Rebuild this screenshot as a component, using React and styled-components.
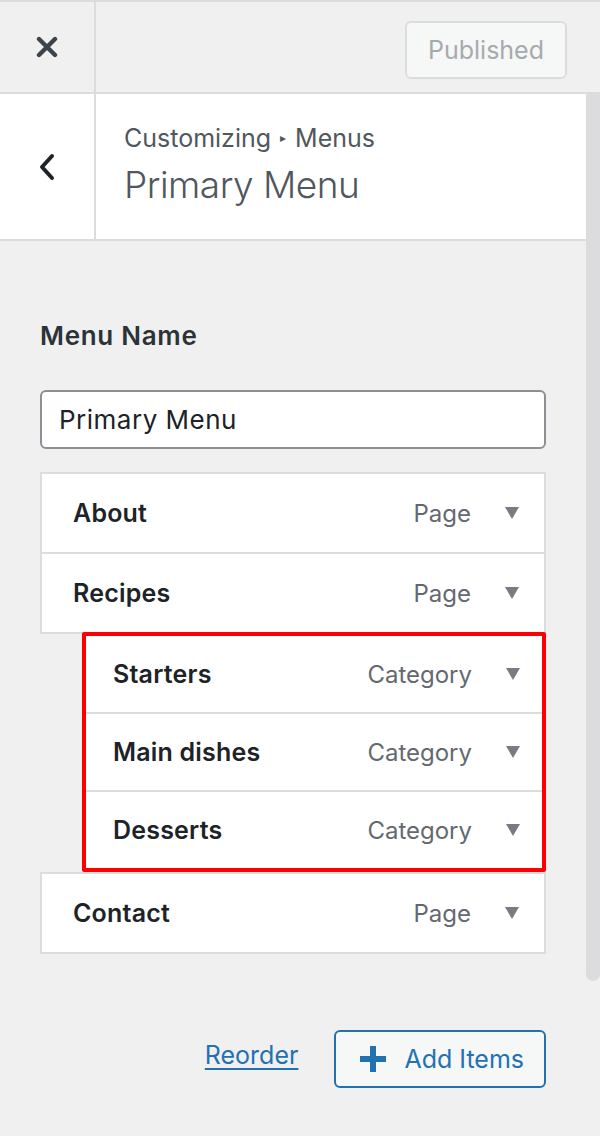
import React from 'react';
import styled, {createGlobalStyle} from 'styled-components';

const GlobalStyle = createGlobalStyle`
  html, body {
    margin: 0;
    padding: 0;
    background: #f0f0f1;
  }
  body {
    font-family: Inter, "Noto Sans", "Liberation Sans", sans-serif;
    -webkit-font-smoothing: antialiased;
  }
`;

const Page = styled.div`
  width: 600px;
  height: 1136px;
  display: flex;
  flex-direction: column;
  overflow: hidden;
  background: #f0f0f1;
`;

const TopBar = styled.div`
  display: flex;
  height: 90px;
  border-top: 2px solid #dcdcde;
  border-bottom: 2px solid #dcdcde;
  background: #f0f0f1;
`;

const CloseCell = styled.div`
  width: 94px;
  display: flex;
  align-items: center;
  justify-content: center;
  border-right: 2px solid #dcdcde;
`;

const TopBarActions = styled.div`
  flex: 1;
  display: flex;
  align-items: center;
  justify-content: flex-end;
  padding-right: 33px;
`;

const PublishedButton = styled.button`
  box-sizing: border-box;
  height: 58px;
  padding: 0 21px 0 21px;
  border: 2px solid #dcdcde;
  border-radius: 6px;
  background: #f6f7f7;
  color: #a7aaad;
  font-family: inherit;
  font-size: 25px;
  margin-top: 6px;
`;

const Below = styled.div`
  flex: 1;
  display: flex;
`;

const Panel = styled.div`
  flex: 1;
  display: flex;
  flex-direction: column;
`;

const ScrollTrack = styled.div`
  width: 14px;
`;

const ScrollThumb = styled.div`
  height: 887px;
  background: #dcdcde;
  border-radius: 0 0 7px 7px;
`;

const Header = styled.div`
  display: flex;
  height: 145px;
  background: #fff;
  border-bottom: 2px solid #dcdcde;
`;

const BackCell = styled.div`
  width: 94px;
  display: flex;
  align-items: center;
  justify-content: center;
  border-right: 2px solid #dcdcde;
`;

const HeaderText = styled.div`
  display: flex;
  flex-direction: column;
  justify-content: center;
  padding-left: 28px;
  color: #50575e;
`;

const Breadcrumb = styled.div`
  font-size: 25px;
  line-height: 30px;
  display: flex;
  align-items: center;
  gap: 9px;
  margin-top: -1px;
`;

const Caret = styled.span`
  font-size: 12px;
`;

const Title = styled.div`
  font-size: 37px;
  font-weight: 300;
  line-height: 48px;
  margin-top: 8px;
  letter-spacing: -0.5px;
`;

const Body = styled.div`
  padding: 80px 40px 0 40px;
  display: flex;
  flex-direction: column;
`;

const Label = styled.div`
  font-size: 26px;
  font-weight: 600;
  line-height: 30px;
  color: #2c3338;
  letter-spacing: 0.7px;
`;

const NameInput = styled.div`
  margin-top: 39px;
  height: 55px;
  border: 2px solid #8c8f94;
  border-radius: 6px;
  background: #fff;
  display: flex;
  align-items: center;
  padding-left: 17px;
  font-size: 26px;
  letter-spacing: 0.5px;
  color: #1d2327;
`;

const MenuList = styled.div`
  margin-top: 23px;
  display: flex;
  flex-direction: column;
`;

const ItemRow = styled.div`
  display: flex;
  align-items: center;
  height: 78px;
  background: #fff;
  border: 2px solid #dcdcde;
  margin-top: ${p => (p.$flush ? '0' : '-2px')};
  padding: 0 25px 0 31px;
`;

const SubRow = styled.div`
  display: flex;
  align-items: center;
  height: 76px;
  background: #fff;
  padding: 0 22px 0 27px;

  & + & {
    border-top: 2px solid #dcdcde;
  }
`;

const ItemTitle = styled.div`
  flex: 1;
  font-size: 25px;
  font-weight: 600;
  color: #1d2327;
  letter-spacing: 0.2px;
`;

const ItemType = styled.div`
  font-size: 24px;
  color: #646970;
  margin-right: 34px;
`;

const SubGroup = styled.div`
  margin-left: 42px;
  margin-top: -2px;
  border: 4px solid #ff0000;
  border-radius: 2px;
  display: flex;
  flex-direction: column;
`;

const Actions = styled.div`
  margin-top: 76px;
  display: flex;
  justify-content: flex-end;
  align-items: center;
  gap: 36px;
`;

const ReorderLink = styled.a`
  font-size: 25px;
  color: #2271b1;
  text-decoration: underline;
  text-underline-offset: 4px;
  text-decoration-thickness: 2px;
  margin-top: -8px;
`;

const AddButton = styled.button`
  box-sizing: border-box;
  height: 58px;
  padding: 0 20px 0 24px;
  border: 2px solid #2271b1;
  border-radius: 6px;
  background: #f6f7f7;
  color: #2271b1;
  font-family: inherit;
  font-size: 25px;
  display: flex;
  align-items: center;
  gap: 18px;
`;

const Triangle = () => (
    <svg width="14" height="12" viewBox="0 0 14 12">
        <path d="M0 0 L14 0 L7 12 Z" fill="#787c82"/>
    </svg>
);

const CloseIcon = () => (
    <svg width="22" height="22" viewBox="0 0 22 22">
        <path d="M3 3 L19 19 M19 3 L3 19" stroke="#3c434a" strokeWidth="4.4" strokeLinecap="round"/>
    </svg>
);

const BackIcon = () => (
    <svg width="16" height="28" viewBox="0 0 16 28">
        <path d="M13 3 L3 14 L13 25" stroke="#1d2327" strokeWidth="4" fill="none" strokeLinecap="round" strokeLinejoin="round"/>
    </svg>
);

const PlusIcon = () => (
    <svg width="26" height="26" viewBox="0 0 26 26">
        <path d="M13 0 V26 M0 13 H26" stroke="#2271b1" strokeWidth="6"/>
    </svg>
);

const topItems = [
    {title: 'About', type: 'Page'},
    {title: 'Recipes', type: 'Page'},
];

const subItems = [
    {title: 'Starters', type: 'Category'},
    {title: 'Main dishes', type: 'Category'},
    {title: 'Desserts', type: 'Category'},
];

export default function App() {
    return (
        <Page>
            <GlobalStyle/>
            <TopBar>
                <CloseCell><CloseIcon/></CloseCell>
                <TopBarActions>
                    <PublishedButton>Published</PublishedButton>
                </TopBarActions>
            </TopBar>

            <Below>
                <Panel>
                    <Header>
                        <BackCell><BackIcon/></BackCell>
                        <HeaderText>
                            <Breadcrumb>Customizing <Caret>▸</Caret> Menus</Breadcrumb>
                            <Title>Primary Menu</Title>
                        </HeaderText>
                    </Header>

                    <Body>
                        <Label>Menu Name</Label>
                        <NameInput>Primary Menu</NameInput>

                        <MenuList>
                            {topItems.map((item, i) => (
                                <ItemRow key={item.title} $flush={i === 0}>
                                    <ItemTitle>{item.title}</ItemTitle>
                                    <ItemType>{item.type}</ItemType>
                                    <Triangle/>
                                </ItemRow>
                            ))}
                            <SubGroup>
                                {subItems.map(item => (
                                    <SubRow key={item.title}>
                                        <ItemTitle>{item.title}</ItemTitle>
                                        <ItemType>{item.type}</ItemType>
                                        <Triangle/>
                                    </SubRow>
                                ))}
                            </SubGroup>
                            <ItemRow $flush>
                                <ItemTitle>Contact</ItemTitle>
                                <ItemType>Page</ItemType>
                                <Triangle/>
                            </ItemRow>
                        </MenuList>

                        <Actions>
                            <ReorderLink href="#">Reorder</ReorderLink>
                            <AddButton><PlusIcon/>Add Items</AddButton>
                        </Actions>
                    </Body>
                </Panel>
                <ScrollTrack>
                    <ScrollThumb/>
                </ScrollTrack>
            </Below>
        </Page>
    );
}
